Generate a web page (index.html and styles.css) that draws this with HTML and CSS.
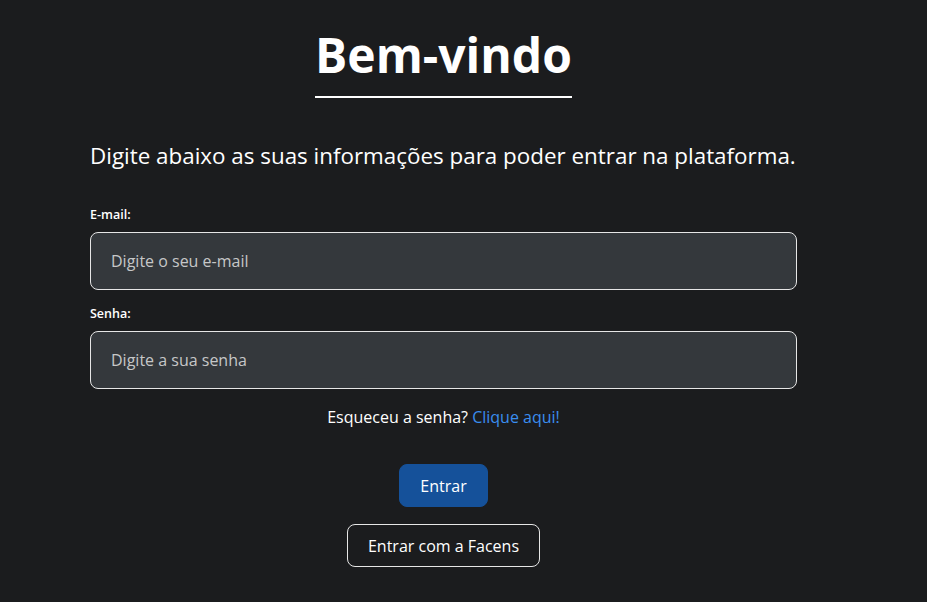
FILE: index.html
```html
<!DOCTYPE html>
<html lang="pt-BR">
<head>
<meta charset="utf-8">
<title>Bem-vindo</title>
<link rel="stylesheet" href="styles.css">
</head>
<body>
<main class="page">
  <div class="title-wrap"><h1 class="title">Bem-vindo</h1></div>
  <p class="subtitle">Digite abaixo as suas informações para poder entrar na plataforma.</p>
  <form class="form">
    <label class="label" for="email">E-mail:</label>
    <input class="input" id="email" type="email" placeholder="Digite o seu e-mail">
    <label class="label label-second" for="senha">Senha:</label>
    <input class="input" id="senha" type="password" placeholder="Digite a sua senha">
    <p class="forgot">Esqueceu a senha? <a class="link" href="#">Clique aqui!</a></p>
    <div class="actions">
      <button class="btn btn-primary" type="button">Entrar</button>
      <button class="btn btn-outline" type="button">Entrar com a Facens</button>
    </div>
  </form>
</main>
</body>
</html>
```
FILE: styles.css
```css
html, body {
  margin: 0;
  padding: 0;
  background: #1b1c1e;
}
body {
  color: #ffffff;
  font-family: "Open Sans", "Noto Sans", sans-serif;
}
.page {
  width: 707px;
  margin-left: 90px;
  padding-top: 22px;
}
.title-wrap {
  text-align: center;
}
.title {
  display: inline-block;
  margin: 0;
  font-size: 48px;
  font-weight: 700;
  padding-bottom: 9px;
  border-bottom: 2px solid #ffffff;
}
.subtitle {
  margin: 42px 0 0;
  font-size: 22.4px;
  white-space: nowrap;
}
.form {
  display: flex;
  flex-direction: column;
  margin-top: 36px;
}
.label {
  font-size: 12.5px;
  line-height: 16px;
  font-weight: 600;
  margin-bottom: 9px;
}
.label-second {
  margin-top: 16px;
}
.input {
  box-sizing: border-box;
  height: 58px;
  width: 100%;
  background: #34383c;
  border: 1px solid #e6e6e6;
  border-radius: 8px;
  padding: 0 20px;
  color: #ffffff;
  font-family: inherit;
  font-size: 16px;
  outline: none;
}
.input::placeholder {
  color: #c6c7c8;
}
.forgot {
  margin: 17px 0 0;
  text-align: center;
  font-size: 16px;
}
.link {
  color: #3a8ef0;
  text-decoration: none;
}
.actions {
  display: flex;
  flex-direction: column;
  align-items: center;
  gap: 17px;
  margin-top: 36px;
}
.btn {
  box-sizing: border-box;
  height: 43px;
  padding: 0 20px;
  border-radius: 8px;
  font-family: inherit;
  font-size: 16px;
  color: #ffffff;
  cursor: pointer;
}
.btn-primary {
  background: #15519a;
  border: 1px solid #15519a;
}
.btn-outline {
  background: transparent;
  border: 1px solid #e6e6e6;
}
```
